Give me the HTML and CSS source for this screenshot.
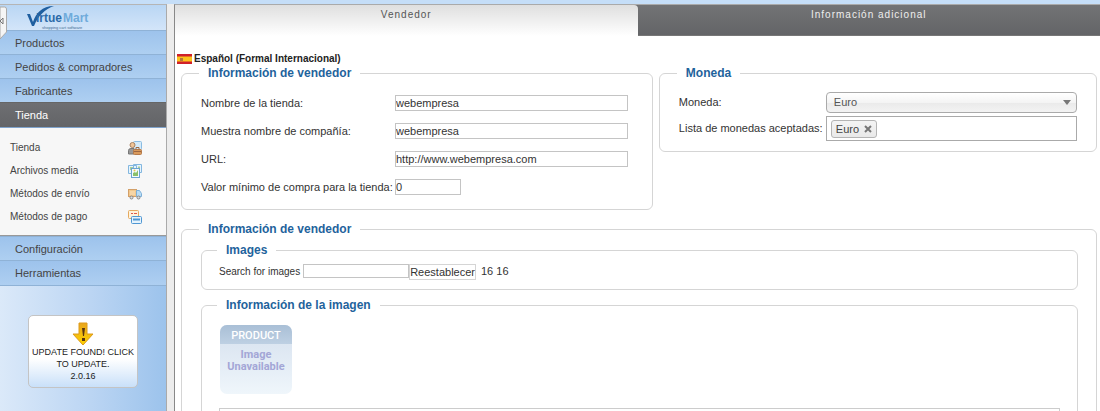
FILE: index.html
```
<!DOCTYPE html>
<html lang="es">
<head>
  <meta charset="UTF-8">
  <meta name="viewport" content="width=device-width, initial-scale=1.0">
  <title>VirtueMart - Tienda</title>
  <link rel="stylesheet" href="styles.css">
</head>
<body>
<div class="topbar"></div>
<div class="page">
  <aside class="sidebar">
    <div class="brand">
      <button class="toggle" type="button" aria-label="Ocultar menú">
        <svg width="7" height="35" viewBox="0 0 7 35">
          <path d="M0 1H4.500Q6.500 1 6.500 3V26L0 33Z" fill="#f5f5f5" stroke="#aaa"/>
          <path d="M0 15l3-3M0 15l3 3M3 12v6" fill="none" stroke="#777"/>
        </svg>
      </button>
      <svg class="logo" width="66" height="25" viewBox="0 0 66 25" role="img" aria-label="VirtueMart">
        <path d="M2 9h3l3 8C11 8 17 1 29 1 20 4 13 11 9 21H7Z" fill="#1f5fa0"/>
        <text x="11" y="17" class="logo-dark">irtue</text>
        <text x="38" y="17" class="logo-light">Mart</text>
        <text x="17" y="24" class="logo-sub">shopping cart software</text>
      </svg>
    </div>
    <nav>
      <a class="item" href="#">Productos</a>
      <a class="item" href="#">Pedidos &amp; compradores</a>
      <a class="item" href="#">Fabricantes</a>
      <a class="item active" href="#">Tienda</a>
      <div class="submenu">
        <a href="#">Tienda
          <svg width="14" height="14" viewBox="0 0 14 14">
            <rect x="5.500" y=".5" width="8" height="8" rx="1" fill="#d5ebfa" stroke="#8bbce2"/>
            <circle cx="4.500" cy="4" r="2.500" fill="#f0c497" stroke="#a98262"/>
            <path d="M.5 13V9.500Q.5 7.500 3 7.500H6V13Z" fill="#999" stroke="#777"/>
            <rect x="5.500" y="8.500" width="8" height="5" rx="1" fill="#d99a5c" stroke="#b57a4a"/>
            <path d="M8 8V6.500h3V8M6 10.500h7" fill="none" stroke="#9b6743"/>
          </svg>
        </a>
        <a href="#">Archivos media
          <svg width="14" height="14" viewBox="0 0 14 14">
            <path d="M.5 1.500h8v8h-8zM5.500.5h8v8h-8z" fill="#e7f4fd" stroke="#83b7df"/>
            <path d="M2 3h3v3H2ZM10 2.500h2v3h-2Z" fill="#a9cf9a"/>
            <rect x="3.500" y="4.500" width="8" height="9" fill="#f5fbff" stroke="#6da4d0"/>
            <path d="M5 12V9l2-1 1 1 2-3v6Z" fill="#8bc06b"/>
            <circle cx="6.500" cy="6.500" r="1" fill="#e5c84e"/>
          </svg>
        </a>
        <a href="#">Métodos de envío
          <svg width="14" height="14" viewBox="0 0 14 14">
            <rect x=".5" y="2.500" width="8" height="7" fill="#f3c88d" stroke="#d3a069"/>
            <path d="M2 5h5M2 7h5" stroke="#fbe4bf"/>
            <path d="M8.500 3.500h3l2 3v3h-5Z" fill="#b8dcf5" stroke="#7eb0d8"/>
            <circle cx="3.500" cy="10.500" r="1.500" fill="#ddd" stroke="#888"/>
            <circle cx="10.500" cy="10.500" r="1.500" fill="#ddd" stroke="#888"/>
          </svg>
        </a>
        <a href="#">Métodos de pago
          <svg width="14" height="14" viewBox="0 0 14 14">
            <rect x=".5" y=".5" width="10" height="8" rx="1" fill="#fff3dc" stroke="#e5a95f"/>
            <path d="M3 3.500h2M6 3.500h3" stroke="#e2574a"/>
            <rect x="3.500" y="6.500" width="10" height="7" rx="1" fill="#e5f3fd" stroke="#4f97d3"/>
            <path d="M5 9.500h7" stroke="#4f97d3" stroke-width="2"/>
          </svg>
        </a>
      </div>
      <a class="item" href="#">Configuración</a>
      <a class="item" href="#">Herramientas</a>
    </nav>
    <a class="update" href="#">
      <svg width="22" height="24" viewBox="0 0 22 24">
        <defs>
          <linearGradient id="arrow" x2="0" y2="1">
            <stop offset="0" stop-color="#e9a51c"/>
            <stop offset="1" stop-color="#ffd400"/>
          </linearGradient>
        </defs>
        <path d="M7 1h8v11h6L11 23 1 12h6Z" fill="url(#arrow)" stroke="#dc9a1c"/>
        <path d="M10 6h3l-1 8h-1ZM10 16h3v3h-3Z" fill="#5a3510"/>
      </svg>
      <span>UPDATE FOUND! CLICK TO UPDATE.</span>
      <span>2.0.16</span>
    </a>
  </aside>

  <main class="main">
    <div class="tabs" role="tablist">
      <button class="tab current" type="button" role="tab" aria-selected="true">Vendedor</button>
      <button class="tab" type="button" role="tab" aria-selected="false">Información adicional</button>
    </div>

    <form class="content">
      <div class="language">
        <svg width="15" height="10" viewBox="0 0 15 10">
          <path d="M0 0h15v10H0Z" fill="#d0202a"/>
          <path d="M0 2.500h15v5H0Z" fill="#fcc41d"/>
          <path d="M3 4h3v3H3Z" fill="#b5763a"/>
        </svg>
        Español (Formal Internacional)
      </div>

      <div class="columns">
        <fieldset class="box vendor">
          <legend>Información de vendedor</legend>
          <div class="row">
            <label for="shop">Nombre de la tienda:</label>
            <input type="text" id="shop" value="webempresa">
          </div>
          <div class="row">
            <label for="company">Muestra nombre de compañía:</label>
            <input type="text" id="company" value="webempresa">
          </div>
          <div class="row">
            <label for="url">URL:</label>
            <input type="text" id="url" value="http://www.webempresa.com">
          </div>
          <div class="row">
            <label for="minimum">Valor mínimo de compra para la tienda:</label>
            <input class="short" type="text" id="minimum" value="0">
          </div>
        </fieldset>

        <fieldset class="box currency">
          <legend>Moneda</legend>
          <div class="row">
            <label for="currency">Moneda:</label>
            <div class="select">
              <select id="currency"><option>Euro</option></select>
            </div>
          </div>
          <div class="row">
            <label for="accepted">Lista de monedas aceptadas:</label>
            <div class="chosen">
              <span class="choice">Euro
                <button type="button" aria-label="Quitar Euro">
                  <svg width="8" height="8" viewBox="0 0 8 8"><path d="M1 1l6 6M7 1L1 7" stroke="#777" stroke-width="2"/></svg>
                </button>
              </span>
              <input type="text" id="accepted">
            </div>
          </div>
        </fieldset>
      </div>

      <fieldset class="box media">
        <legend>Información de vendedor</legend>
        <fieldset class="box search">
          <legend>Images</legend>
          <div class="search-row">
            <label for="search">Search for images</label>
            <input type="text" id="search">
            <button type="reset">Reestablecer</button>
            <span class="count">16 16</span>
          </div>
        </fieldset>
        <fieldset class="box image">
          <legend>Información de la imagen</legend>
          <div class="thumb">
            <strong>PRODUCT</strong>
            <span>Image<br>Unavailable</span>
          </div>
          <div class="details"></div>
        </fieldset>
      </fieldset>
    </form>
  </main>
</div>
</body>
</html>
```
FILE: styles.css
```
* {
  box-sizing: border-box;
}
body {
  margin: 0;
  height: 100vh;
  display: flex;
  flex-direction: column;
  overflow: hidden;
  font-family: "Liberation Sans", Arial, sans-serif;
  font-size: 11px;
  color: #333;
  background: #fff;
}
a {
  color: inherit;
  text-decoration: none;
}
button,
input,
select {
  font: inherit;
  color: inherit;
}
button {
  padding: 0;
  border: none;
  background: none;
  cursor: pointer;
}
svg {
  display: block;
  flex: none;
}
.topbar {
  height: 4px;
  flex: none;
  background: #c5def8;
}
.page {
  flex: 1;
  min-height: 0;
  display: flex;
}

/* sidebar */
.sidebar {
  width: 167px;
  flex: none;
  border-top: 1px solid #b5b5b5;
  border-right: 1px solid #aaa;
  background: linear-gradient(to right, #dbe9f9, #bbd5f3 55%, #9cc3ec);
}
.brand {
  position: relative;
  height: 25px;
  padding-left: 25px;
  background: linear-gradient(#b9d6f4, #d3e5f9);
}
.toggle {
  position: absolute;
  left: 0;
  top: 1px;
}
.logo-dark,
.logo-light {
  font-size: 12px;
  font-weight: bold;
  fill: #2d6ba8;
}
.logo-light {
  fill: #6fabdb;
}
.logo-sub {
  font-size: 4px;
  fill: #3f6a94;
}
.item {
  display: block;
  height: 24px;
  line-height: 25px;
  padding-left: 15px;
  border-top: 1px solid #8fb2d6;
  background: linear-gradient(#9dc3ec, #aecff1);
  color: #444;
}
.item:last-child {
  height: 26px;
  border-bottom: 1px solid #8fb2d6;
}
.item.active {
  height: 25px;
  border-color: #666;
  background: linear-gradient(#6e6f72, #636467);
  color: #fff;
}
.submenu {
  padding: 8px 24px 7px 10px;
  border-top: 1px solid #7fa3cc;
  border-bottom: 1px solid #999;
  background: #f7f7f7;
  font-size: 10px;
  color: #444;
}
.submenu a {
  display: flex;
  align-items: center;
  justify-content: space-between;
  height: 23px;
}
.update {
  display: flex;
  flex-direction: column;
  align-items: center;
  width: 110px;
  margin: 29px 0 0 28px;
  padding: 6px 1px 5px;
  border: 1px solid #c4c4c4;
  border-radius: 5px;
  background: linear-gradient(#fff 60%, #c9e0f9);
  font-size: 9px;
  line-height: 12px;
  text-align: center;
  color: #222;
}

/* main */
.main {
  flex: 1;
  min-width: 0;
  overflow: hidden;
  margin-left: 7px;
  border-top: 1px solid #aaa;
  border-left: 1px solid #888;
  box-shadow: -7px 0 0 #ececec;
}
.tabs {
  display: flex;
  background: #6e6f72;
}
.tab {
  flex: 1;
  height: 31px;
  padding-bottom: 12px;
  border-bottom: 1px solid #777;
  background: linear-gradient(#727375, #636467);
  font-size: 10px;
  letter-spacing: 1px;
  color: #eee;
}
.tab.current {
  border-bottom: none;
  border-top-right-radius: 4px;
  background: linear-gradient(#dfdfdf, #fff);
  color: #555;
}
.content {
  padding: 16px 3px 0 2px;
}
.language {
  display: flex;
  align-items: center;
  gap: 2px;
  height: 13px;
  font-size: 10px;
  font-weight: bold;
  color: #222;
}
.columns {
  display: grid;
  grid-template-columns: 14fr 13fr;
  gap: 6px;
  align-items: start;
  margin-left: 4px;
}
.box {
  min-width: 0;
  margin: 0;
  padding: 8px 24px 8px 19px;
  border: 1px solid #d5d5d5;
  border-radius: 6px;
}
legend {
  margin-left: -2px;
  padding: 0 9px;
  line-height: 16px;
  font-size: 12px;
  font-weight: bold;
  color: #1f639c;
}
.row {
  display: grid;
  grid-template-columns: 194px 1fr;
  align-items: center;
  height: 28px;
  white-space: nowrap;
}
input {
  width: 100%;
  height: 16px;
  padding: 0;
  border: 1px solid #c4c4c4;
  background: #fff;
  outline: none;
}
.short {
  width: 66px;
}
.currency {
  padding: 8px 19px 10px;
}
.currency .row {
  grid-template-columns: 147px 1fr;
  height: 26px;
}
.select {
  position: relative;
}
.select::after {
  content: "";
  position: absolute;
  right: 6px;
  top: 8px;
  border: 4px solid transparent;
  border-top: 5px solid #777;
  border-bottom: none;
}
select {
  display: block;
  width: 100%;
  height: 21px;
  padding: 0 7px;
  appearance: none;
  border: 1px solid #aaa;
  border-radius: 4px;
  background: linear-gradient(#fff, #f4f4f4 50%, #eaeaea 52%, #f3f3f3);
  color: #555;
}
.chosen {
  display: flex;
  height: 25px;
  padding: 3px 4px;
  border: 1px solid #aaa;
}
.chosen input {
  flex: 1;
  min-width: 0;
  border: none;
}
.choice {
  display: flex;
  align-items: center;
  gap: 5px;
  height: 18px;
  padding: 0 4px;
  border: 1px solid #b4b4b4;
  border-radius: 3px;
  background: linear-gradient(#f4f4f4, #e9e9e9);
  color: #444;
}
.media {
  margin: 11px 0 0 4px;
  padding: 5px 18px 20px 19px;
}
.search {
  padding: 6px 17px 9px;
}
.search-row {
  display: flex;
  height: 16px;
  line-height: 15px;
}
.search-row label {
  padding-right: 3px;
  font-size: 10px;
}
.search-row input {
  width: 106px;
  height: 14px;
}
.search-row button {
  border: 1px solid #d5d5d5;
}
.count {
  margin-left: 5px;
}
.image {
  margin-top: 7px;
  padding: 12px 17px 20px;
}
.thumb {
  width: 72px;
  height: 69px;
  margin-left: 1px;
  border-radius: 7px;
  overflow: hidden;
  background: linear-gradient(#d5e0ee, #eff6fb);
  font-family: Roboto, sans-serif;
  font-size: 11px;
  font-weight: bold;
  line-height: 12px;
  text-align: center;
  color: #a3a6d6;
}
.thumb strong {
  display: block;
  height: 19px;
  margin-bottom: 5px;
  line-height: 22px;
  font-size: 11px;
  font-weight: 500;
  background: linear-gradient(#a9bfd6, #bed0e3);
  color: #fff;
}
.thumb span {
  display: block;
}
.details {
  height: 120px;
  margin-top: 14px;
  border: 1px solid #ccc;
}
```
